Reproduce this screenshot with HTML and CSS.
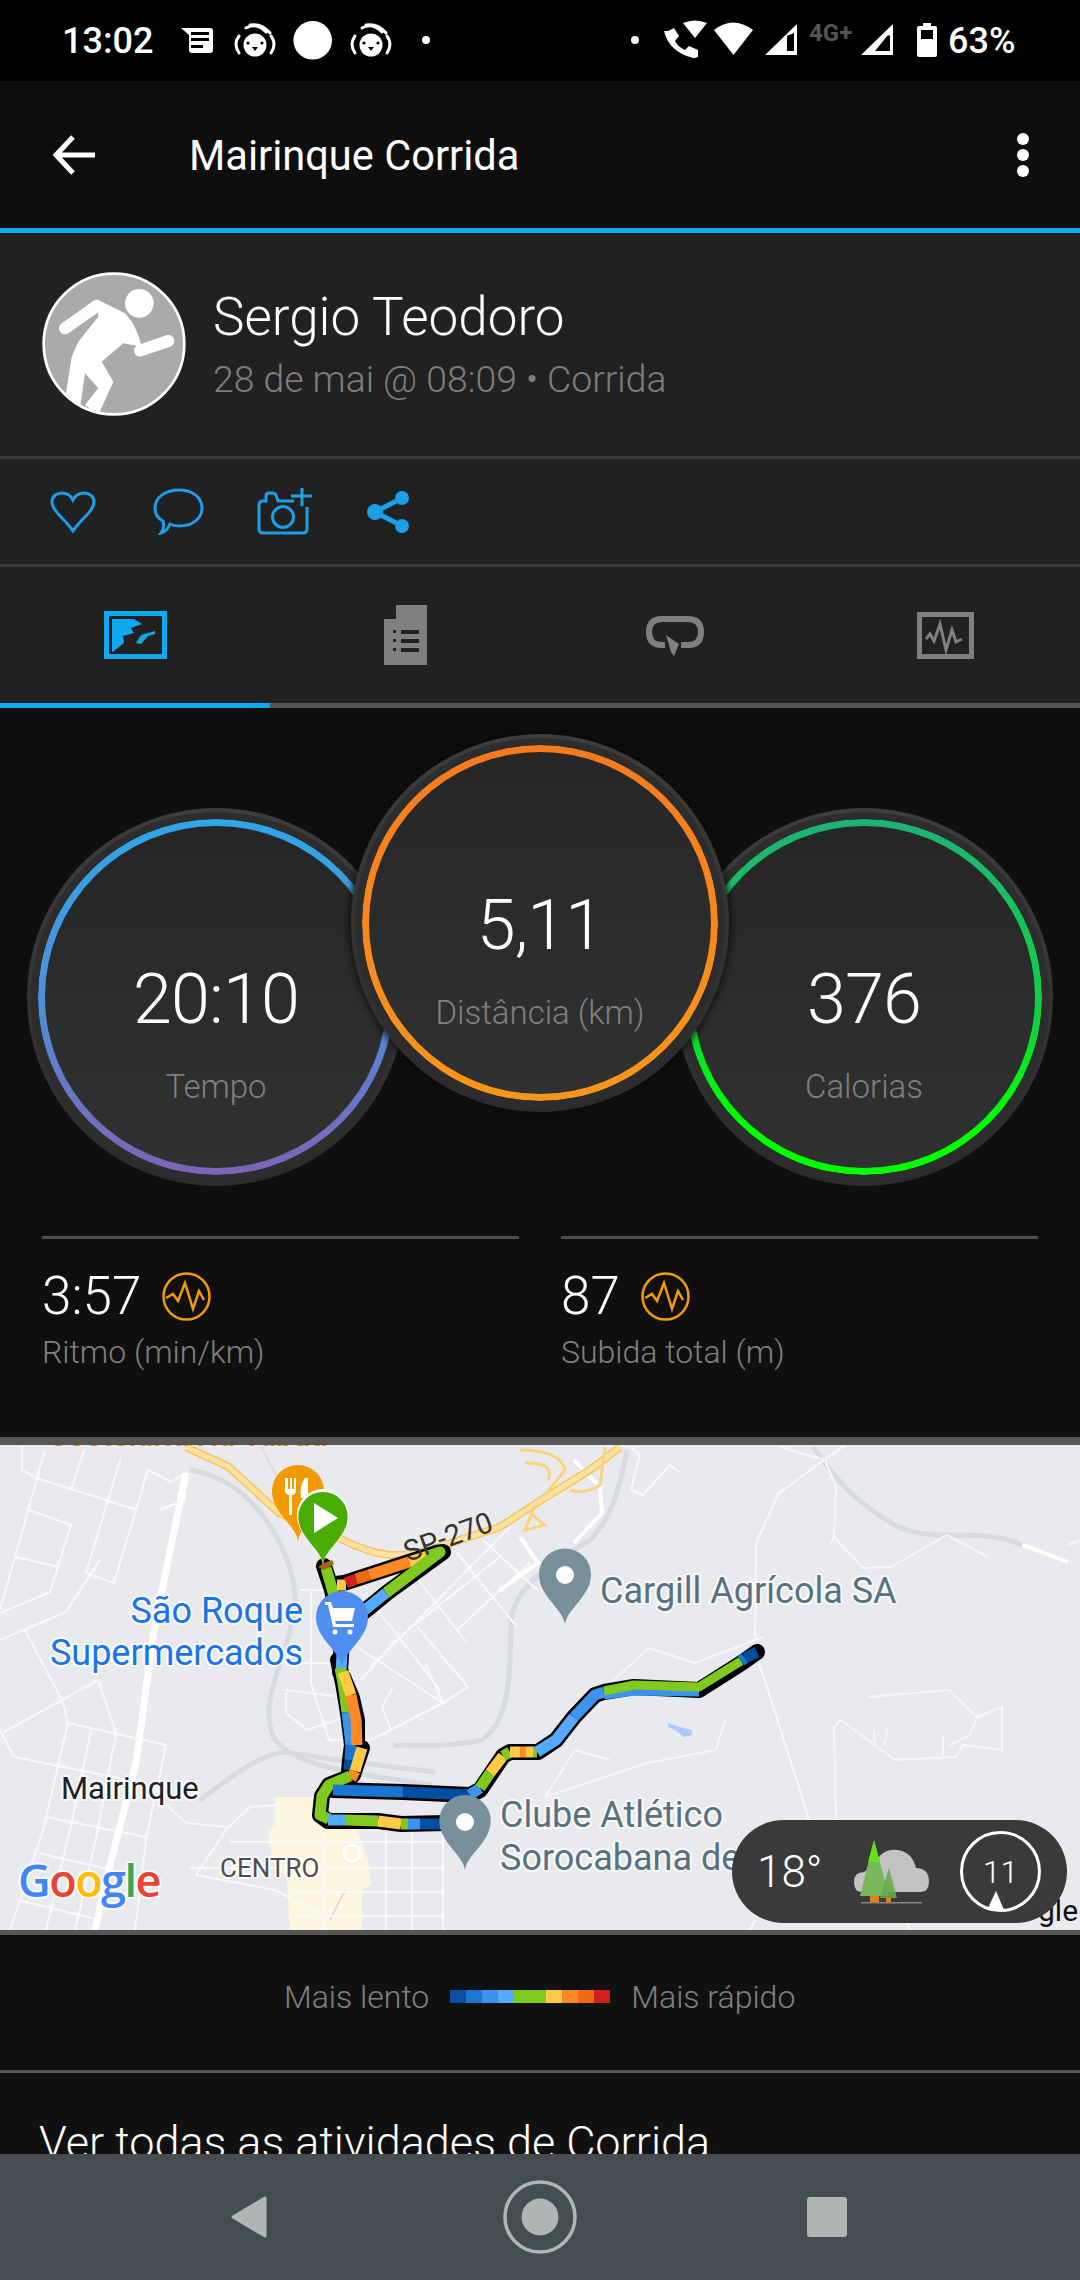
FILE: index.html
```html
<!DOCTYPE html>
<html lang="pt">
<head>
<meta charset="utf-8">
<title>Mairinque Corrida</title>
<link rel="stylesheet" href="styles.css">
</head>
<body>
<div class="screen">
  <header class="status">
    <span class="status-time">13:02</span>
    <svg class="status-left" viewBox="178 15 254 50" width="254" height="50">
      <path class="w" d="M181 28h29a3 3 0 0 1 3 3v19a3 3 0 0 1-3 3h-18a3 3 0 0 1-3-3V35z"/>
      <path class="k" d="M191 32h18v3h-18zM191 38h18v3h-18zM191 45h12v3h-12z"/>
      <g id="face">
        <circle class="w" cx="255" cy="45" r="11.5"/>
        <circle class="k" cx="248" cy="43" r="1.6"/><circle class="k" cx="262" cy="43" r="1.6"/>
        <path class="k" d="M252 47h6l-3 4z"/>
        <path class="ws" d="M239 36q-6 8 0 17M271 36q6 8 0 17M246 28q10-6 20 4M250 25q12-2 20 8"/>
      </g>
      <circle class="w" cx="312.7" cy="40.3" r="19.3"/>
      <use href="#face" x="116"/>
      <circle class="w" cx="426" cy="40" r="4"/>
    </svg>
    <span class="status-spacer"></span>
    <svg class="status-right" viewBox="632 15 310 50" width="310" height="50">
      <circle class="w" cx="637" cy="40" r="4"/>
      <path class="w" d="M685 23q12-5 24 0l-12 15z"/>
      <path class="w" d="M670 31l6-3 5 8-4 5q3 6 10 9l4-4 9 4v7q-2 1-5 1q-24-6-29-27z"/>
      <path class="w" d="M716 30q19-15 39 0l-19.500 25z"/>
      <path class="w" d="M767 55l32-31v31zM789 36v15h7V33z" fill-rule="evenodd"/>
      <text class="net" x="811" y="41">4G+</text>
      <path class="w" d="M863 55l32-31v31zM877 51h15V36l-2-1z" fill-rule="evenodd"/>
      <path class="w" d="M925 23h8v3h4q2 0 2 2v27q0 2-2 2h-16q-2 0-2-2V28q0-2 2-2h4zM923 30v9h12v-9z" fill-rule="evenodd"/>
    </svg>
    <span class="status-batt">63%</span>
  </header>

  <div class="appbar">
    <svg class="appbar-back" viewBox="0 0 42 40" width="42" height="40"><path d="M20 2L3 20l17 18M3 20h39"/></svg>
    <h1 class="appbar-title">Mairinque Corrida</h1>
    <div class="appbar-more"><i></i><i></i><i></i></div>
  </div>

  <section class="profile">
    <svg class="avatar" viewBox="36 36 432 432" width="144" height="144">
      <defs><clipPath id="avclip"><circle cx="252" cy="252" r="210"/></clipPath></defs>
      <circle cx="252" cy="252" r="211" class="av-bg"/>
      <g clip-path="url(#avclip)" class="av-run">
        <circle cx="328" cy="130" r="43"/>
        <path d="M200 118L285 160Q320 195 335 260L280 250L215 305L250 365L205 465L165 435L205 385L165 340L150 445L108 400L125 290L145 245L205 170z"/>
        <path class="av-limb" d="M105 205L200 138M330 272L415 243"/>
      </g>
    </svg>
    <div class="profile-text">
      <div class="profile-name">Sergio Teodoro</div>
      <div class="profile-meta">28 de mai @ 08:09 • Corrida</div>
    </div>
  </section>

  <div class="actions">
    <svg class="act" viewBox="0 0 46 42" width="46" height="42"><path d="M23 40C15 28 2 20 2 11C2 5 7 2 12 2C17 2 21 5 23 9C25 5 29 2 34 2C39 2 44 5 44 11C44 20 31 28 23 40Z"/></svg>
    <svg class="act" viewBox="0 0 51 47" width="51" height="47"><path d="M26 2C39 2 49 9 49 20C49 31 39 38 26 38C22 38 19 37 17 36C15 41 12 44 8 45C11 41 11 37 10 33C4 30 2 25 2 20C2 9 13 2 26 2Z"/></svg>
    <svg class="act" viewBox="0 0 55 47" width="55" height="47"><path d="M37 13H21l-2-6q-1-2-4-2h-3q-3 0-3 3v5H6q-4 0-4 4v24q0 4 4 4h40q4 0 4-4V19"/><circle cx="26" cy="29" r="10.500"/><path d="M34 8h21M45 0v18"/></svg>
    <svg class="act act-fill" viewBox="0 0 43 42" width="43" height="42"><circle cx="35" cy="7" r="7"/><circle cx="8" cy="21" r="8"/><circle cx="35" cy="35" r="7"/><path class="act-line" d="M35 7L8 21l27 14"/></svg>
  </div>

  <nav class="tabs">
    <div class="tab tab-on">
      <svg viewBox="0 0 63 48" width="63" height="48"><path class="t-blue" d="M0 0h63v48H0zM5 5v38h53V5z" fill-rule="evenodd"/><path class="t-blue" d="M8 8h22l8 5-11 4 3 5-11 3 1 7-10 8-2 1zM51 20l-14 4-5 8 5 1 7-8 7-2z"/></svg>
    </div>
    <div class="tab">
      <svg viewBox="0 0 43 60" width="43" height="60"><path class="t-gray" d="M12 0h31v60H0V14l12 0z"/><path class="t-bg" d="M9 25h3v3H9zM17 25h18v4H17zM9 34h3v3H9zM17 34h18v4H17zM9 43h3v3H9zM17 43h18v4H17z"/></svg>
    </div>
    <div class="tab">
      <svg viewBox="0 0 60 41" width="60" height="41"><path class="t-line" d="M20 30H17Q4 30 4 17Q4 4 17 4H43Q56 4 56 17Q56 30 43 30H36"/><path class="t-gray" d="M21 20l13 9-5 12-3-4z"/></svg>
    </div>
    <div class="tab">
      <svg viewBox="0 0 57 47" width="57" height="47"><path class="t-gray" d="M0 0h57v47H0zM5 5v37h47V5z" fill-rule="evenodd"/><path class="t-pulse" d="M9 27l4-5 4 7 6-17 6 26 6-20 4 12 6-3"/></svg>
    </div>
  </nav>

  <main class="content">
    <div class="summary">
      <div class="gauges">
        <div class="gauge gauge-side">
          <div class="gauge-band gauge-blue"><div class="gauge-face">
            <div class="gauge-value">20:10</div><div class="gauge-label">Tempo</div>
          </div></div>
        </div>
        <div class="gauge gauge-main">
          <div class="gauge-band gauge-orange"><div class="gauge-face">
            <div class="gauge-value">5,11</div><div class="gauge-label">Distância (km)</div>
          </div></div>
        </div>
        <div class="gauge gauge-side">
          <div class="gauge-band gauge-green"><div class="gauge-face">
            <div class="gauge-value">376</div><div class="gauge-label">Calorias</div>
          </div></div>
        </div>
      </div>
      <div class="stats">
        <div class="stat">
          <div class="stat-top"><span class="stat-value">3:57</span>
            <svg class="badge" viewBox="0 0 49 49" width="49" height="49"><circle cx="24.500" cy="24.500" r="23"/><path d="M4 26l7-4 5 7 7-18 8 26 6-18 5 9"/></svg></div>
          <div class="stat-label">Ritmo (min/km)</div>
        </div>
        <div class="stat">
          <div class="stat-top"><span class="stat-value">87</span>
            <svg class="badge" viewBox="0 0 49 49" width="49" height="49"><circle cx="24.500" cy="24.500" r="23"/><path d="M4 26l7-4 5 7 7-18 8 26 6-18 5 9"/></svg></div>
          <div class="stat-label">Subida total (m)</div>
        </div>
      </div>
    </div>

    <div class="map">
      <svg class="map-canvas" viewBox="0 1445 1080 485" width="1080" height="485">
        <defs>
          <symbol id="pin" viewBox="0 0 52 76"><path d="M26 76C24 60 0 48 0 26A26 26 0 1 1 52 26C52 48 28 60 26 76Z"/></symbol>
        </defs>
        <path class="urban" d="M275 1797H320L330 1825H355L368 1860L371 1885L362 1890V1930H290L287 1880L272 1860L268 1830L275 1825z"/>
        <path class="water" d="M668 1723l12 4 12 3v5l-8 2-9-7-7-3z"/>

        <path class="rail" d="M190 1470C260 1480 295 1560 295 1600C290 1660 255 1700 275 1740C300 1770 370 1775 432 1785"/>
        <path class="rail" d="M200 1800C240 1770 260 1755 285 1752C330 1760 380 1765 435 1772"/>
        <path class="rail" d="M511 1620C510 1680 510 1720 482 1740C440 1748 420 1745 393 1745"/>
        <path class="rail" d="M511 1620C515 1590 540 1570 590 1540C610 1520 620 1490 627 1450"/>
        <path class="rail" d="M813 1447C830 1470 850 1500 895 1525C930 1545 980 1525 1022 1545"/>
        <path class="rail-thin" d="M260 1445L290 1500M330 1920L345 1890"/>

        <g class="road-s">
          <path d="M36 1478L137 1510M45 1450L0 1610M84 1450L71 1490M121 1457L86 1573L114 1583L148 1470M29 1510L71 1525L50 1592L0 1613M16 1557L59 1567M66 1612L0 1640M66 1612L100 1560"/>
          <path d="M25 1630L62 1700L68 1723L166 1745L146 1840L135 1930M98 1680L4 1732M98 1680L116 1733M68 1723L43 1830L10 1930M91 1730L70 1830L46 1930M116 1735L95 1843L75 1930"/>
          <path d="M0 1730L14 1757L143 1783L186 1823L229 1827L250 1807L279 1805M46 1817L146 1837M39 1853L125 1873M18 1900L100 1920M22 1445V1470L36 1478"/>
          <path d="M148 1470L171 1482L186 1473M186 1473L185 1500L160 1510"/>
          <path d="M413 1573L467 1643M457 1553L517 1627M483 1540L537 1590M370 1600L440 1690M510 1527L395 1643L370 1667M530 1563L457 1630M500 1557L417 1623"/>
          <path d="M357 1647L443 1703L468 1687L414 1623M443 1703L371 1740L329 1740M396 1640L361 1680M393 1687L382 1707L391 1730M425 1663L443 1703"/>
          <path d="M286 1690L343 1697M286 1693V1713L307 1730L346 1717M311 1590V1683L329 1740M286 1663H336M300 1590H330"/>
          <path d="M228 1827L196 1875L275 1890L323 1915M323 1790V1930M386 1830V1930M412 1830V1930M443 1825V1930M230 1842H443M190 1868H443M290 1892H443M295 1916H443"/>
          <path d="M640 1455L631 1490L643 1495L670 1465L679 1472M631 1447L640 1455"/>
          <path d="M845 1445L779 1493L756 1543L755 1637M759 1663L799 1787L809 1820"/>
          <path d="M755 1920L750 1930M905 1915L910 1930"/>
        </g>
        <circle class="road-ring" cx="352" cy="1853" r="8"/>
        <g class="road-f">
          <path d="M868 1697L949 1690L977 1717L1002 1707L1002 1750L963 1745L956 1757L895 1760L841 1720L834 1727L836 1820M977 1717L970 1735L950 1745M875 1745L874 1730M888 1728L884 1745M943 1735V1758"/>
          <path d="M988 1557L947 1535L891 1567L863 1568L834 1537L836 1487L825 1460L780 1447M834 1537L830 1545M1068 1545L1080 1540"/>
          <path d="M606 1687L649 1648L695 1663L763 1637M545 1797L647 1763L716 1750L725 1720M545 1797L575 1750L610 1760"/>
        </g>
        <path class="road-m" d="M1023 1545L1068 1562"/>
        <path class="road-m" d="M574 1460L600 1487L602 1513L574 1543M520 1537L538 1563L500 1590"/>
        <path class="road-l" d="M186 1473L154 1630L136 1763L107 1877L95 1930"/>
        <path class="hwy-o" d="M186 1447L229 1467L279 1513L343 1540C379 1558 400 1558 429 1550L500 1527L546 1497L590 1470L620 1447"/>
        <path class="hwy-i" d="M186 1447L229 1467L279 1513L343 1540C379 1558 400 1558 429 1550L500 1527L546 1497L590 1470L620 1447"/>
        <path class="hwy-t" d="M520 1450Q560 1450 565 1470L545 1495M525 1463Q555 1462 548 1480M605 1447L600 1485Q585 1495 570 1490M530 1513L545 1525L525 1530L535 1505"/>

        <text class="lbl-orange" x="48" y="1446">Costelaria Na Tábua</text>

        <g class="outline">
          <path d="M324 1566L332 1590L342 1640L340 1672"/>
          <path d="M336 1584L344 1583L436 1553L443 1552L388 1592L366 1610L345 1628"/>
          <path d="M338 1660L343 1683L348 1713L352 1745L350 1760L349 1772"/>
          <path d="M343 1677L352 1698L357 1720L357 1745"/>
          <path d="M362 1748L353 1775"/>
          <path d="M352 1776L329 1785L322 1796L320 1815L328 1821L378 1821L401 1824L447 1823"/>
          <path d="M333 1790L403 1792L470 1795L480 1790L503 1756L510 1752L538 1752L556 1740L574 1717L595 1695L604 1692L634 1687L699 1690L743 1662L757 1652"/>
        </g>
        <g class="seg">
          <path class="c-g" d="M326 1568L333 1592L340 1625"/>
          <path class="c-4" d="M342 1655L341 1672"/>
          <path class="c-g" d="M340 1668L343 1683L347 1712"/>
          <path class="c-3" d="M347 1712L351 1745"/>
          <path class="c-2" d="M351 1745L350 1760"/>
          <path class="c-1" d="M350 1760L349 1770"/>
          <path class="c-y" d="M343 1672L351 1695"/>
          <path class="c-o" d="M351 1695L356 1720L357 1745"/>
          <path class="c-y" d="M362 1748L355 1771"/>
          <path class="c-o" d="M355 1771L351 1779"/>
          <path class="c-y" d="M337 1585H346"/>
          <path class="c-r" d="M346 1583L356 1579"/>
          <path class="c-do" d="M356 1579L369 1575"/>
          <path class="c-o" d="M369 1575L409 1562"/>
          <path class="c-y" d="M409 1562L428 1556"/>
          <path class="c-g" d="M428 1556L440 1552L386 1593"/>
          <path class="c-4" d="M386 1593L366 1609L348 1625"/>
          <path class="c-g" d="M350 1776L329 1785L322 1796L320 1815L329 1819"/>
          <path class="c-4" d="M328 1820H345"/>
          <path class="c-g" d="M345 1820L378 1821"/>
          <path class="c-y" d="M378 1821L401 1824"/>
          <path class="c-g" d="M401 1824H408"/>
          <path class="c-3" d="M408 1824H420"/>
          <path class="c-1" d="M420 1824H445"/>
          <path class="c-2" d="M333 1790L403 1792"/>
          <path class="c-1" d="M403 1792L470 1795"/>
          <path class="c-3" d="M470 1795L480 1788"/>
          <path class="c-g" d="M480 1788L490 1773"/>
          <path class="c-y" d="M490 1773L503 1756"/>
          <path class="c-g" d="M503 1756L510 1752"/>
          <path class="c-y" d="M510 1752H520"/>
          <path class="c-o" d="M520 1752H526"/>
          <path class="c-y" d="M526 1752H533"/>
          <path class="c-g" d="M533 1752H537"/>
          <path class="c-4" d="M537 1752L556 1740L574 1717"/>
          <path class="c-3" d="M574 1717L595 1695L604 1692"/>
          <path class="c-3" d="M604 1694L634 1690L699 1691"/>
          <path class="c-gn" d="M604 1691L634 1685L699 1687L741 1661"/>
          <path class="c-2" d="M741 1661L745 1658"/>
          <path class="c-1" d="M745 1658L757 1652"/>
        </g>
        <path class="tip-start" d="M318 1567l6-4 8-3 2 4-10 6z"/>

        <use href="#pin" class="pin-food" x="272" y="1465" width="52" height="76"/>
        <path class="pin-sym" d="M285 1478v13q0 3 4 4v20h3v-20q4-1 4-4v-13h-2v11h-2v-11h-2v11h-2v-11zM305 1478q-6 8-4 20h4v18h3v-38z"/>
        <use href="#pin" class="pin-ring" x="295" y="1489" width="56" height="76"/>
        <use href="#pin" class="pin-start" x="297" y="1492" width="52" height="72"/>
        <path class="pin-sym" d="M314 1503l24 15-24 15z"/>
        <use href="#pin" class="pin-shop" x="316" y="1591" width="52" height="76"/>
        <path class="pin-sym" d="M325 1602h6l2 6h22l-3 13h-17l1 3h18v3h-21l-5-22h-3z"/>
        <circle class="pin-sym" cx="335" cy="1632" r="2.500"/><circle class="pin-sym" cx="350" cy="1632" r="2.500"/>
        <use href="#pin" class="pin-gray" x="539" y="1548" width="52" height="77"/>
        <circle class="pin-sym" cx="565" cy="1575" r="9"/>
        <use href="#pin" class="pin-gray" x="439" y="1795" width="52" height="75"/>
        <circle class="pin-sym" cx="465" cy="1822" r="9"/>

        <text class="lbl lbl-shop" x="303" y="1623">São Roque</text>
        <text class="lbl lbl-shop" x="303" y="1665">Supermercados</text>
        <text class="lbl lbl-town" x="61" y="1799">Mairinque</text>
        <text class="lbl lbl-area" x="220" y="1877">CENTRO</text>
        <text class="lbl lbl-poi" x="600" y="1603">Cargill Agrícola SA</text>
        <text class="lbl lbl-poi" x="500" y="1827">Clube Atlético</text>
        <text class="lbl lbl-poi" x="500" y="1870">Sorocabana de</text>
        <text class="lbl-road" transform="translate(408 1562) rotate(-20)">SP-270</text>
        <text class="lbl lbl-google" x="18" y="1897"><tspan class="g-b">G</tspan><tspan class="g-r">o</tspan><tspan class="g-y">o</tspan><tspan class="g-b">g</tspan><tspan class="g-g">l</tspan><tspan class="g-r">e</tspan></text>
        <text class="lbl-gle" x="1038" y="1921">gle</text>
      </svg>

      <div class="weather">
        <span class="weather-temp">18°</span>
        <svg class="weather-icon" viewBox="0 0 76 64" width="76" height="64">
          <path class="cloud" d="M8 52Q0 52 0 42Q0 32 10 32Q14 28 20 30Q24 8 44 10Q58 12 62 28Q75 28 75 42Q75 52 66 52z"/>
          <path class="tree-a" d="M20 0L35 56H6z"/>
          <path class="tree-b" d="M20 0L26 22H14z"/>
          <path class="tree-c" d="M35 28L43 58H26z"/>
          <rect class="trunk" x="16" y="56" width="9" height="6"/><rect class="trunk" x="32" y="58" width="5" height="4"/>
          <rect class="ground" x="7" y="62" width="61" height="1.500"/>
        </svg>
        <div class="compass">
          <span>11</span>
          <svg class="compass-tip" viewBox="0 0 16 20" width="16" height="20"><path d="M8 0L16 19 0 17z"/></svg>
        </div>
      </div>
    </div>

    <div class="legend">
      <span>Mais lento</span>
      <div class="legend-bar"><i class="c1"></i><i class="c2"></i><i class="c3"></i><i class="c4"></i><i class="c5"></i><i class="c6"></i><i class="c7"></i><i class="c8"></i><i class="c9"></i></div>
      <span>Mais rápido</span>
    </div>
    <div class="seeall">Ver todas as atividades de Corrida</div>
  </main>

  <footer class="navbar">
    <svg class="nav-ico" viewBox="0 0 36 42" width="36" height="42"><path d="M34 2v38L2 21z"/></svg>
    <svg class="nav-ico" viewBox="0 0 74 74" width="74" height="74"><circle class="nav-ring" cx="37" cy="37" r="35"/><circle cx="37" cy="37" r="18.500"/></svg>
    <svg class="nav-ico" viewBox="0 0 40 40" width="40" height="40"><rect width="40" height="40" rx="3"/></svg>
  </footer>
</div>
</body>
</html>
```

FILE: styles.css
```css
* { box-sizing: border-box; }
html, body { margin: 0; padding: 0; background: #000; }
body { font-family: Roboto, "Liberation Sans", sans-serif; }

.screen { width: 1080px; height: 2280px; display: flex; flex-direction: column; overflow: hidden; position: relative; background: #111; }

/* status bar */
.status { flex: none; height: 81px; background: #000; display: flex; align-items: flex-start; color: #fff; }
.status-time { width: 116px; margin-left: 62px; margin-top: 20px; font-size: 36px; line-height: 42px; font-weight: 500; }
.status-left { margin-left: 0; margin-top: 15px; }
.status-spacer { flex: 1; }
.status-right { margin-top: 15px; }
.status-batt { width: 70px; margin-left: 8px; margin-right: 62px; margin-top: 20px; font-size: 36px; line-height: 42px; font-weight: 500; }
.w { fill: #fff; }
.k { fill: #000; }
.ws { fill: none; stroke: #fff; stroke-width: 3; stroke-linecap: round; }
.net { fill: #555; font-size: 24px; font-weight: 700; font-family: Roboto, sans-serif; }

/* app bar */
.appbar { flex: none; height: 152px; background: #0e0e0e; border-bottom: 5px solid #10a8ee; display: flex; align-items: center; padding-left: 53px; padding-right: 51px; }
.appbar-back path { fill: none; stroke: #fff; stroke-width: 5; }
.appbar-title { flex: 1; margin: 2px 0 0 94px; font-size: 41.6px; line-height: 48px; font-weight: 400; color: #fff; }
.appbar-more { display: flex; flex-direction: column; gap: 4px; }
.appbar-more i { display: block; width: 12px; height: 12px; border-radius: 50%; background: #fff; }

/* profile */
.profile { flex: none; height: 226px; background: #212121; border-bottom: 3px solid #3a3a3a; display: flex; align-items: flex-start; padding: 39px 0 0 42px; }
.avatar { flex: none; }
.av-bg { fill: #aaa; stroke: #fff; stroke-width: 8; }
.av-run { fill: #fff; }
.av-limb { fill: none; stroke: #fff; stroke-width: 36; stroke-linecap: round; }
.profile-text { margin-left: 27px; padding-top: 15px; }
.profile-name { font-size: 53px; line-height: 60px; font-weight: 300; color: #fff; }
.profile-meta { font-size: 37.3px; line-height: 46px; font-weight: 300; color: #7e7e7e; margin-top: 9px; }

/* actions */
.actions { flex: none; height: 108px; background: #212121; border-bottom: 3px solid #3a3a3a; display: grid; grid-template-columns: 103px 104px 110px 43px; align-items: center; padding-left: 50px; }
.act path, .act circle { fill: none; stroke: #1a9fe8; stroke-width: 3; }
.act-fill circle { fill: #1a9fe8; stroke: none; }
.act-fill .act-line { stroke-width: 5; }

/* tabs */
.tabs { flex: none; height: 141px; background: #212121; display: grid; grid-template-columns: repeat(4, 270px); }
.tab { border-bottom: 5px solid #565656; display: flex; align-items: center; justify-content: center; }
.tab-on { border-bottom-color: #10a8ee; }
.t-blue { fill: #10a8ee; }
.t-gray { fill: #808080; }
.t-bg { fill: #212121; }
.t-line { fill: none; stroke: #808080; stroke-width: 6; }
.t-pulse { fill: none; stroke: #808080; stroke-width: 3; }

/* content */
.content { flex: 1; min-height: 0; overflow: hidden; background: #111; }
.summary { height: 729px; background: #0f0f0f; padding-top: 26px; }

.gauges { display: flex; padding-left: 27px; height: 453px; align-items: flex-start; }
.gauge { flex: none; width: 378px; height: 378px; border-radius: 50%; padding: 4px; background: linear-gradient(#3d3d3d, #2b2b2b); position: relative; }
.gauge-side { margin-top: 74px; }
.gauge-main { margin: 0 -54px; z-index: 1; box-shadow: 0 0 7px 2px rgba(10,10,10,.8); }
.gauge-band { width: 100%; height: 100%; border-radius: 50%; padding: 14px; background: #2d2d2d; position: relative; }
.gauge-face { width: 100%; height: 100%; border-radius: 50%; background: linear-gradient(#262626, #303232); display: flex; flex-direction: column; align-items: center; color: #fff; position: relative; }
.gauge-face::before { content: ""; position: absolute; inset: -7px; border-radius: 50%; padding: 7px; background: var(--ring); -webkit-mask: linear-gradient(#000 0 0) content-box exclude, linear-gradient(#000 0 0); mask: linear-gradient(#000 0 0) content-box exclude, linear-gradient(#000 0 0); }
.gauge-blue { --ring: linear-gradient(#2ea6e6 0%, #4f8fd8 50%, #7d63b8 100%); }
.gauge-orange { --ring: linear-gradient(#f47a20, #f7961c); }
.gauge-green { --ring: linear-gradient(#1fb277 0%, #10d040 55%, #00ff00 85%); }
.gauge-value { margin-top: 133px; font-size: 70px; line-height: 80px; font-weight: 300; letter-spacing: -0.8px; }
.gauge-label { margin-top: 29px; font-size: 33px; line-height: 38px; font-weight: 300; color: #808080; }

.stats { display: grid; grid-template-columns: 477px 477px; column-gap: 42px; padding: 49px 42px 0; }
.stat { border-top: 3px solid #4e4e4e; padding-top: 31px; }
.stat-top { display: flex; align-items: center; height: 52px; }
.stat-value { font-size: 53px; line-height: 52px; font-weight: 300; color: #fff; margin-right: 21px; }
.badge circle, .badge path { fill: none; stroke: #f59c00; stroke-width: 2.5; }
.stat-label { margin-top: 10px; font-size: 32px; line-height: 40px; font-weight: 300; color: #808080; }

/* map */
.map { position: relative; height: 498px; border-top: 8px solid #565656; border-bottom: 5px solid #565656; background: #e8eaed; overflow: hidden; }
.map-canvas { display: block; }
.urban { fill: #fdf6de; }
.water { fill: #a8c7fa; }
.rail { fill: none; stroke: #d8dbde; stroke-width: 5; }
.rail-thin { fill: none; stroke: #dcdfe2; stroke-width: 2; }
.road-s { fill: none; stroke: #f8f9fa; stroke-width: 2; stroke-linejoin: round; }
.road-f { fill: none; stroke: #f6f7f8; stroke-width: 2; stroke-linejoin: round; }
.road-m { fill: none; stroke: #fff; stroke-width: 4; stroke-linejoin: round; }
.road-l { fill: none; stroke: #fff; stroke-width: 7; stroke-linejoin: round; }
.road-ring { fill: #fdf6de; stroke: #fff; stroke-width: 3; }
.hwy-o { fill: none; stroke: #f8c463; stroke-width: 8; stroke-linejoin: round; }
.hwy-i { fill: none; stroke: #ffe2a0; stroke-width: 5; stroke-linejoin: round; }
.hwy-t { fill: none; stroke: #fbd27a; stroke-width: 3; }
.outline { fill: none; stroke: #000; stroke-width: 16; stroke-linejoin: round; stroke-linecap: round; }
.seg { fill: none; stroke-width: 11; stroke-linejoin: round; }
.c-1 { stroke: #004ea0; }
.c-2 { stroke: #1976d2; }
.c-3 { stroke: #3b93ee; }
.c-4 { stroke: #55a9ff; }
.c-g { stroke: #80c91e; }
.c-gn { stroke: #80c91e; stroke-width: 9; }
.c-y { stroke: #ffcb47; }
.c-o { stroke: #ff8a25; }
.c-do { stroke: #ee6911; }
.c-r { stroke: #d3201f; }
.tip-start { fill: #a5631c; }
.pin-food { fill: #f29900; }
.pin-ring { fill: #f8f8f8; }
.pin-start { fill: #48ad00; }
.pin-shop { fill: #4f8ef0; }
.pin-gray { fill: #78909c; }
.pin-sym { fill: #fff; }
.lbl { paint-order: stroke; stroke: rgba(255,255,255,.75); stroke-width: 4px; stroke-linejoin: round; }
.lbl-orange { fill: #ef8f00; font-size: 31px; font-weight: 500; }
.lbl-shop { fill: #1a73e8; font-size: 36px; text-anchor: end; }
.lbl-town { fill: #202124; font-size: 31px; }
.lbl-area { fill: #4d4d50; font-size: 26px; }
.lbl-poi { fill: #587180; font-size: 36px; }
.lbl-road { fill: #333; font-size: 29px; }
.lbl-google { font-size: 45px; font-weight: 600; font-family: "Open Sans", Roboto, sans-serif; letter-spacing: -1.5px; }
.lbl-gle { fill: #111; font-size: 30px; }
.g-b { fill: #4285f4; }
.g-r { fill: #ea4335; }
.g-y { fill: #fbbc05; }
.g-g { fill: #34a853; }

.weather { position: absolute; left: 732px; top: 375px; width: 335px; height: 103px; border-radius: 52px; background: #3a3a3a; display: flex; align-items: center; color: #fff; padding-left: 25px; }
.weather-temp { font-size: 44px; line-height: 50px; font-weight: 300; width: 97px; }
.weather-icon { flex: none; overflow: visible; }
.cloud { fill: #c2c2c2; }
.tree-a { fill: #78b85a; }
.tree-b { fill: #66e01e; }
.tree-c { fill: #6aa84a; opacity: .9; }
.trunk { fill: #f07f09; }
.ground { fill: #888; }
.compass { position: relative; flex: none; margin-left: 30px; width: 81px; height: 81px; border: 3px solid #fff; border-radius: 50%; display: flex; align-items: center; justify-content: center; font-size: 32px; font-weight: 300; }
.compass-tip { position: absolute; left: 25px; bottom: -2px; }
.compass-tip path { fill: #fff; }

/* legend */
.legend { height: 138px; border-bottom: 3px solid #565656; display: flex; align-items: center; padding-left: 284px; gap: 21px; font-size: 32px; font-weight: 300; color: #808080; padding-bottom: 12px; }
.legend-bar { display: grid; grid-template-columns: 16px 16px 16px 16px 32px 16px 16px 16px 16px; height: 13px; width: 160px; }
.c1 { background: #0b4ea2; }
.c2 { background: #1976d2; }
.c3 { background: #3a93ef; }
.c4 { background: #55a9ff; }
.c5 { background: #80c91e; }
.c6 { background: #ffcb47; }
.c7 { background: #ff8a25; }
.c8 { background: #ee6911; }
.c9 { background: #d3201f; }
.seeall { padding: 43px 0 0 39px; font-size: 45px; line-height: 54px; font-weight: 300; color: #fff; white-space: nowrap; }

/* nav */
.navbar { flex: none; height: 126px; background: #454d53; display: flex; align-items: center; padding-top: 0; }
.nav-ico { flex: none; }
.nav-ico path, .nav-ico rect, .nav-ico circle { fill: #b0b5b6; stroke: none; }
.nav-ico path { stroke: #b0b5b6; stroke-width: 3; stroke-linejoin: round; }
.nav-ico .nav-ring { fill: none; stroke: #b0b5b6; stroke-width: 3.5; }
.nav-ico:nth-child(1) { margin-left: 231px; }
.nav-ico:nth-child(2) { margin-left: 236px; }
.nav-ico:nth-child(3) { margin-left: 230px; }
```
